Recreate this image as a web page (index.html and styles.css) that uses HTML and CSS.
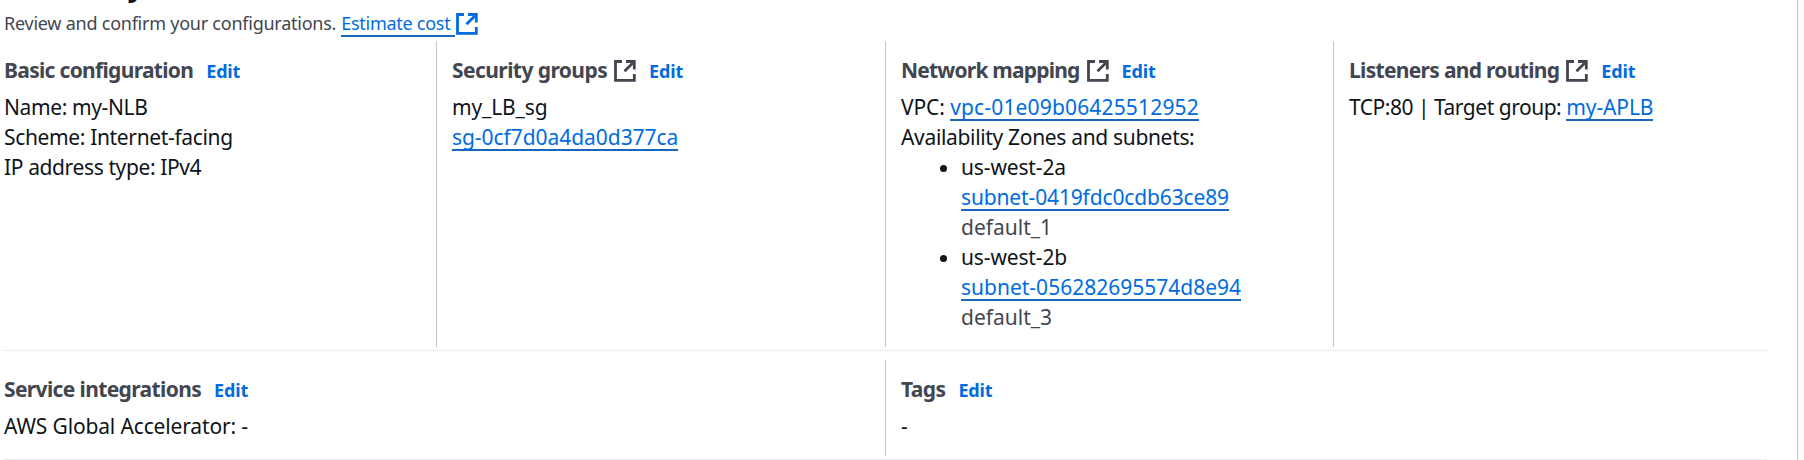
FILE: index.html
```
<!DOCTYPE html>
<html lang="en">
<head>
<meta charset="utf-8">
<title>Summary</title>
<link rel="stylesheet" href="styles.css">
</head>
<body>
<svg width="0" height="0" class="defs"><defs>
<symbol id="external" viewBox="0 0 22 22"><path d="M8 1.5H1.5v18.8h18.8V14M12 1.5h8.3V9.5M20 1.8L10.5 11.3" fill="none" stroke="currentColor" stroke-width="2.8"/></symbol>
</defs></svg>
<main class="panel">
  <header class="intro">
    <h2 class="title">Summary</h2>
    <p class="lead"><span class="t-lead">Review and confirm your configurations.</span><a class="link t-cost">Estimate cost</a><svg class="icon blue"><use href="#external"/></svg></p>
  </header>
  <div class="row four">
    <section class="col">
      <h3 class="head"><span class="h-basic">Basic configuration</span><a class="edit">Edit</a></h3>
      <div><span class="t-name">Name: my-NLB</span></div>
      <div><span class="t-scheme">Scheme: Internet-facing</span></div>
      <div><span class="t-ip">IP address type: IPv4</span></div>
    </section>
    <section class="col">
      <h3 class="head"><span class="h-sec">Security groups</span><svg class="icon"><use href="#external"/></svg><a class="edit">Edit</a></h3>
      <div><span class="t-mysg">my_LB_sg</span></div>
      <div><a class="link t-sg">sg-0cf7d0a4da0d377ca</a></div>
    </section>
    <section class="col">
      <h3 class="head"><span class="h-net">Network mapping</span><svg class="icon"><use href="#external"/></svg><a class="edit">Edit</a></h3>
      <div><span class="t-vpc">VPC: </span><a class="link t-vpcid">vpc-01e09b06425512952</a></div>
      <div><span class="t-az">Availability Zones and subnets:</span></div>
      <ul class="zones">
        <li><span class="t-2a">us-west-2a</span><br><a class="link t-sub1">subnet-0419fdc0cdb63ce89</a><br><span class="muted">default_1</span></li>
        <li><span class="t-2a">us-west-2b</span><br><a class="link t-sub2">subnet-056282695574d8e94</a><br><span class="muted">default_3</span></li>
      </ul>
    </section>
    <section class="col">
      <h3 class="head"><span class="h-lis">Listeners and routing</span><svg class="icon"><use href="#external"/></svg><a class="edit">Edit</a></h3>
      <div><span class="t-tcp">TCP:80 | Target group: </span><a class="link t-aplb">my-APLB</a></div>
    </section>
  </div>
  <div class="row two">
    <section class="col">
      <h3 class="head"><span class="h-srv">Service integrations</span><a class="edit">Edit</a></h3>
      <div><span class="t-aws">AWS Global Accelerator: -</span></div>
    </section>
    <section class="col">
      <h3 class="head"><span class="h-tags">Tags</span><a class="edit">Edit</a></h3>
      <div>-</div>
    </section>
  </div>
</main>
</body>
</html>
```
FILE: styles.css
```
* { box-sizing: border-box; }
body { margin: 0; height: 460px; overflow: hidden; background: #fbfbfc; color: #0f141a; font: 21px/30px "Noto Sans", sans-serif; }
.defs { display: block; }
.panel { width: 1798px; height: 460px; padding-left: 4px; background: #fff; border-right: 1px solid #c0c0c8; overflow: hidden; }
.intro { display: flow-root; height: 41px; }
.title { margin: -33px 0 0; height: 41px; font-size: 30px; line-height: 36px; font-weight: 700; letter-spacing: -.4px; }
.lead { margin: 0; height: 32px; display: flex; align-items: flex-start; font-size: 18px; line-height: 30px; color: #424650; }
.lead .link { margin-left: 5px; width: 114px; background-position: 0 27px; }
.row { display: grid; width: 1763px; }
.four { grid-template-columns: 432px 449px 448px 434px; height: 310px; padding-bottom: 3px; border-bottom: 1px solid #ebebf0; }
.two { grid-template-columns: 881px 1fr; height: 109px; padding: 9px 0 3px; border-bottom: 1px solid #ebebf0; }
.col { padding: 14px 0 0 15px; border-left: 1px solid #c6c6cd; }
.col div span { white-space: pre; }
.col:first-child { padding-left: 0; border-left: 0; }
.head { display: flex; margin: 0 0 7px; height: 30px; font-size: 21px; font-weight: 700; color: #424650; }
.edit { margin-left: 13px; font-size: 18px; line-height: 33px; font-weight: 700; letter-spacing: -.15px; color: #006ce0; }
.link { color: #006ce0; display: inline-block; height: 30px; vertical-align: top; background: linear-gradient(#1a66b8, #1a66b8) 0 27px / 100% 2px no-repeat; }
.icon { width: 22px; height: 22px; margin: 5px 0 0 7px; flex: none; color: #424650; }
.icon.blue { color: #006ce0; margin: 5px 0 0 1px; }
.zones { margin: 0; padding-left: 60px; }
.muted { color: #424650; }
.t-lead { letter-spacing: -.24px; }
.t-cost { letter-spacing: -.27px; }
.h-basic { letter-spacing: -.69px; }
.h-sec { letter-spacing: -.57px; }
.h-net { letter-spacing: -.8px; }
.h-lis { letter-spacing: -.69px; }
.h-srv { letter-spacing: -.63px; }
.h-tags { letter-spacing: -.6px; }
.t-name, .t-ip { letter-spacing: -.38px; }
.t-scheme { letter-spacing: -.35px; }
.t-mysg, .t-2a, .t-sub1 { letter-spacing: -.14px; }
.t-sg { letter-spacing: -.05px; }
.t-vpc { letter-spacing: -.1px; }
.t-vpcid { letter-spacing: .16px; }
.t-az { letter-spacing: -.33px; }
.t-tcp { letter-spacing: -.48px; }
.t-aplb { letter-spacing: -.1px; }
.t-aws { letter-spacing: -.15px; }
```
